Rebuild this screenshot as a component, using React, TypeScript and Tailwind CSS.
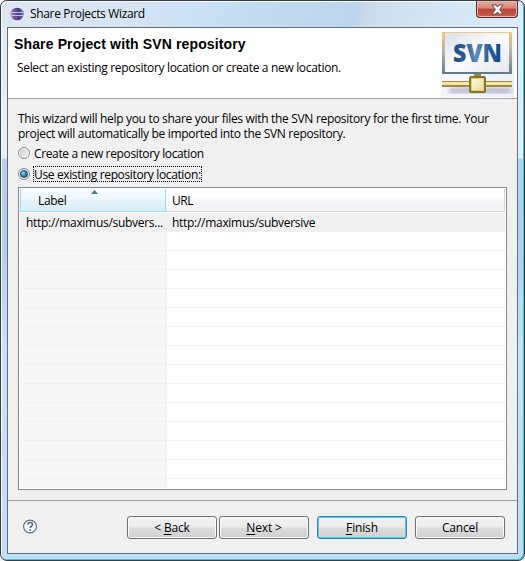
import React from "react";

const rows = Array.from({ length: 13 }, (_, i) => i);

function EclipseIcon() {
  return (
    <svg width="14" height="14" viewBox="0 0 14 14">
      <defs>
        <linearGradient id="ecl" x1="0" x2="1">
          <stop offset="0" stopColor="#e0a0b4" />
          <stop offset=".25" stopColor="#7a5f9f" />
          <stop offset=".65" stopColor="#453b83" />
          <stop offset="1" stopColor="#7f7ab5" />
        </linearGradient>
      </defs>
      <ellipse cx="7" cy="7" rx="6.8" ry="6.3" fill="url(#ecl)" />
      <path d="M1 5.5h12M1 8.5h12" stroke="#b9c4ea" strokeWidth="1" />
    </svg>
  );
}

function SvnBanner() {
  return (
    <svg width="73" height="67" viewBox="0 0 73 67">
      <defs>
        <linearGradient id="bg" x1="0" y1="0" x2="1" y2="1">
          <stop offset="0" stopColor="#fff" />
          <stop offset="1" stopColor="#e9eefa" />
        </linearGradient>
        <linearGradient id="frame" x1="0" y1="0" x2="0" y2="1">
          <stop offset="0" stopColor="#f2c77f" />
          <stop offset=".45" stopColor="#b9b5a5" />
          <stop offset="1" stopColor="#647f8c" />
        </linearGradient>
        <linearGradient id="screen" x1="0" y1="0" x2="1" y2="1">
          <stop offset="0" stopColor="#d9e2ec" />
          <stop offset=".5" stopColor="#fbfbfd" />
          <stop offset="1" stopColor="#e5e8ef" />
        </linearGradient>
        <linearGradient id="svnText" x1="0" y1="0" x2="1" y2="0">
          <stop offset="0" stopColor="#1a4c84" />
          <stop offset=".25" stopColor="#2c609b" />
          <stop offset=".48" stopColor="#5c8abd" />
          <stop offset=".72" stopColor="#2d629d" />
          <stop offset="1" stopColor="#104682" />
        </linearGradient>
        <linearGradient id="gold" x1="0" y1="0" x2="1" y2="1">
          <stop offset="0" stopColor="#fffef0" />
          <stop offset="1" stopColor="#e6d68c" />
        </linearGradient>
        <filter id="soft"><feGaussianBlur stdDeviation="2" /></filter>
      </defs>
      <rect width="73" height="67" fill="url(#bg)" />
      <path d="M8 58h56l7 1v4H8z" fill="#a49cb8" opacity=".75" filter="url(#soft)" />
      <rect x="1" y="2" width="70" height="42" fill="url(#frame)" />
      <rect x="4" y="3" width="64" height="39" fill="url(#screen)" />
      <path d="M1 43h70" stroke="#607d86" strokeWidth="2" />
      <text x="12" y="32" textLength="49" lengthAdjust="spacingAndGlyphs" fontFamily="Open Sans, sans-serif" fontWeight="800" fontSize="24" fill="url(#svnText)">SVN</text>
      <path d="M1 54h70" stroke="#a28b35" strokeWidth="6" />
      <path d="M1 53.5h70" stroke="#f6e8ac" strokeWidth="3" />
      <path d="M33 45h7" stroke="#9a8640" strokeWidth="2" />
      <rect x="29" y="47" width="15" height="15" rx="1" fill="url(#gold)" stroke="#887522" strokeWidth="2" />
      <rect x="30.5" y="48.5" width="12" height="12" fill="none" stroke="#e3d187" strokeWidth="1" />
    </svg>
  );
}

function Button({ children, primary }: { children: React.ReactNode; primary?: boolean }) {
  return (
    <button
      className={
        "flex h-[23px] w-[90px] items-center justify-center rounded-[3px] border bg-[linear-gradient(#f3f3f3,#ebebeb_48%,#dddddd_52%,#cfcfcf)] pb-px tracking-[-0.15px] " +
        (primary ? "border-[#3c7fb1] shadow-[inset_0_0_0_1px_#48d0f5]" : "border-[#707070] shadow-[inset_0_0_0_1px_#fafafa]")
      }
    >
      <span className="whitespace-pre">{children}</span>
    </button>
  );
}

export default function App() {
  return (
    <div className="h-[561px] w-[525px] overflow-hidden bg-[#f4f4f4] font-['Open_Sans','Noto_Sans',sans-serif] text-[12px] leading-[15px] text-black">
      <div className="flex h-full flex-col rounded-[7px] border border-[#383c43] bg-[linear-gradient(#dfecf6_0,#e4f1fa_157px,#b9d2ec_158px,#b4d0ea_250px,#c9e2f8_350px,#c3dbf3)] px-[6px] pb-[6px] shadow-[inset_-1px_-1px_0_#35c5e5,inset_1px_1px_0_#f5fbff]">
        <div className="-mx-[5px] mt-px flex h-[25px] shrink-0 rounded-t-[6px] bg-[linear-gradient(105deg,#dce7f2_0,#d4e4f3_25%,#c9dff4_40%,#bdd5ed_68%,#cbdcec_70%,#d5e6f5_85%,#dcecf8)] pl-[8px]">
          <div className="pt-[5px]"><EclipseIcon /></div>
          <span className="ml-[6px] mt-[4px] tracking-[-0.34px]">Share Projects Wizard</span>
          <button className="ml-auto mr-[5px] -mt-px flex h-[17px] w-[42px] items-center justify-center rounded-b-[4px] border border-t-0 border-[#592a30] bg-[linear-gradient(#e7aba0,#d58477_45%,#b94537_50%,#c95d4b)] shadow-[inset_0_0_0_1px_#e9b5aa]">
            <svg width="13" height="11" viewBox="0 0 13 11">
              <path d="M1 1h4l1.5 2L8 1h4L8.5 5.5 12 10H8L6.5 8 5 10H1l3.5-4.5z" fill="#fff" stroke="#59535c" />
            </svg>
          </button>
        </div>
        <div className="flex min-h-0 flex-1 flex-col border border-[#5e6f7c] bg-[#f0f0f0]">
          <header className="flex h-[71px] shrink-0 justify-between border-b border-[#a0a0a0] bg-white">
            <div className="pl-[6px] pt-[8px]">
              <h1 className="whitespace-nowrap font-['Liberation_Sans',Arial,sans-serif] text-[14px] font-bold leading-[16px] tracking-[0.14px]">Share Project with SVN repository</h1>
              <p className="ml-[3px] mt-[8px] whitespace-nowrap tracking-[-0.33px]">Select an existing repository location or create a new location.</p>
            </div>
            <div className="mr-[3px] pt-[2px]"><SvnBanner /></div>
          </header>
          <main className="flex h-[402px] shrink-0 flex-col border-b border-[#a0a0a0] px-[10px] pt-[12px]">
            <p className="whitespace-nowrap tracking-[-0.315px]">This wizard will help you to share your files with the SVN repository for the first time. Your<br />project will automatically be imported into the SVN repository.</p>
            <label className="mt-[4px] flex h-[16px] items-center">
              <span className="h-3 w-3 rounded-full border border-[#8e8f8f] bg-[linear-gradient(135deg,#c5c9cd,#f6f6f6)] shadow-[inset_0_0_0_1px_#f4f4f4]" />
              <span className="ml-[4px] tracking-[-0.36px]">Create a new repository location</span>
            </label>
            <label className="mt-[5px] flex h-[16px] items-center">
              <span className="flex h-3 w-3 items-center justify-center rounded-full border border-[#7e8688] bg-[#eef2f4]">
                <span className="h-2 w-2 rounded-full border border-[#173f5c] bg-[radial-gradient(circle_at_35%_35%,#b8edff,#299bcd_40%,#124464)]" />
              </span>
              <span className="ml-[3px] flex h-[16px] w-[169px] items-center whitespace-nowrap border border-dotted border-black tracking-[-0.36px]">Use existing repository location:</span>
            </label>
            <div className="mt-[5px] flex h-[303px] w-[489px] flex-col border border-[#828790] bg-white p-px">
              <div className="flex h-[24px] shrink-0">
                <div className="relative flex h-[23px] w-[146px] items-center border border-t-0 border-[#96d9f9] bg-[linear-gradient(#f3fafd_45%,#e4f2f8_50%,#d7edf6)] pl-[17px] tracking-[-0.3px]">
                  Label
                  <svg className="absolute left-[70px] top-px" width="7" height="4" viewBox="0 0 7 4"><path d="M0 4 3.5 0 7 4z" fill="#477a98" /></svg>
                </div>
                <div className="flex h-[23px] flex-1 items-center border-r border-b border-[#d5d5d5] bg-[linear-gradient(#fff_43%,#f7f8fa_45%,#f1f2f4)] pl-[6px] tracking-[-0.4px]">URL</div>
              </div>
              <div className="flex min-h-0 flex-1 flex-col overflow-hidden">
                <div className="flex h-[19px] shrink-0 items-center bg-[#f0f0f0] tracking-[-0.29px]">
                  <span className="w-[147px] pl-[6px]">http://maximus/subvers...</span>
                  <span className="pl-[5px]">http://maximus/subversive</span>
                </div>
                {rows.map((r) => (
                  <div key={r} className="flex h-[19px] shrink-0 border-b border-[#f0f0f0]">
                    <div className="w-[147px] border-r border-[#f0f0f0] bg-[#f7f7f7]" />
                  </div>
                ))}
                <div className="w-[147px] flex-1 border-r border-[#f0f0f0] bg-[#f7f7f7]" />
              </div>
            </div>
          </main>
          <footer className="flex pl-[15px] pt-[15px]">
            <svg className="mt-[3px]" width="15" height="15" viewBox="0 0 15 15">
              <circle cx="7" cy="7.5" r="6.4" fill="#fafcff" stroke="#60758b" strokeWidth="1.2" />
              <path d="M4.9 5.7c0-3 4.6-2.8 4.6-.2 0 1.7-2.3 1.8-2.3 3.5M7.2 10.3v1.6" fill="none" stroke="#526a83" strokeWidth="1.6" />
            </svg>
            <div className="ml-[89px] flex">
              <Button>&lt; <u className="underline-offset-2">B</u>ack</Button>
              <div className="ml-[2px]"><Button><u className="underline-offset-2">N</u>ext &gt;</Button></div>
              <div className="ml-[8px]"><Button primary><u className="underline-offset-2">F</u>inish</Button></div>
              <div className="ml-[8px]"><Button>Cancel</Button></div>
            </div>
          </footer>
        </div>
      </div>
    </div>
  );
}
